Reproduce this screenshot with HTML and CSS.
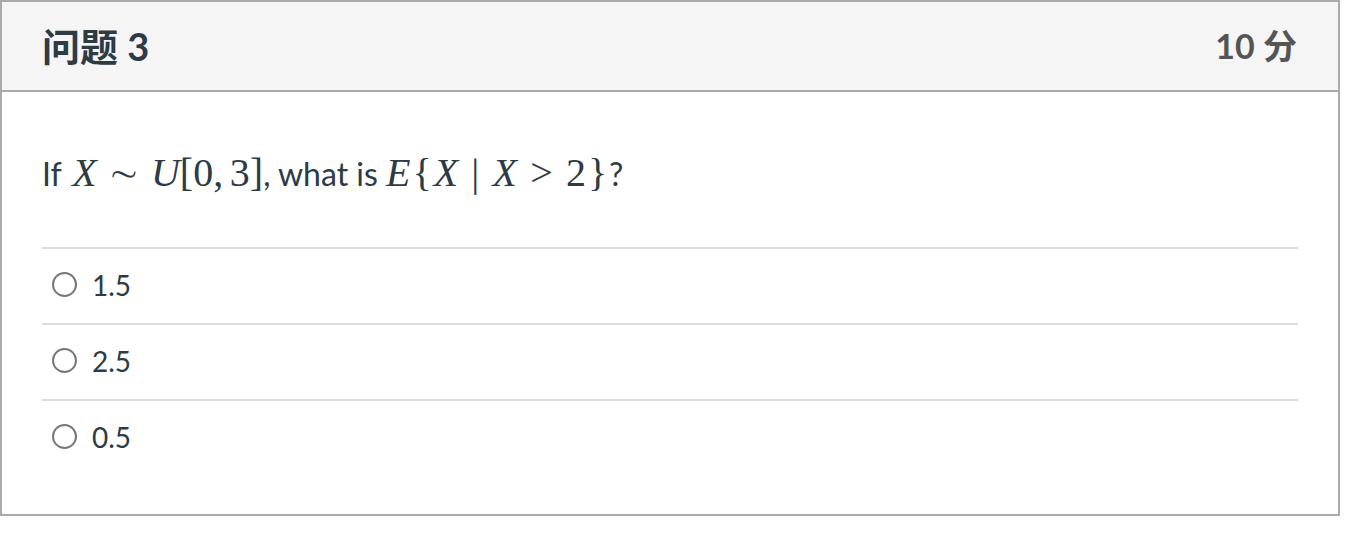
FILE: index.html
```html
<!DOCTYPE html>
<html lang="zh">
<head>
<meta charset="utf-8">
<title>问题 3</title>
<link rel="stylesheet" href="styles.css">
</head>
<body>
<div class="question">
  <div class="header">
    <h2 class="title">问题 3</h2>
    <div class="points">10 分</div>
  </div>
  <div class="content">
    <p class="text">If <span class="m m-first"><i>X</i><span class="rel">∼</span><i>U</i>[0,<span class="thin"></span>3]</span>, what is <span class="m"><i>E</i><span class="br">{</span><i>X</i><span class="rel rel-wide">|</span><i>X</i><span class="rel rel-wide">&gt;</span>2<span class="br">}</span></span>?</p>
    <div class="answers">
      <label class="answer"><span class="radio"></span><span class="atext">1.5</span></label>
      <label class="answer"><span class="radio"></span><span class="atext">2.5</span></label>
      <label class="answer"><span class="radio"></span><span class="atext">0.5</span></label>
    </div>
  </div>
</div>
</body>
</html>
```

FILE: styles.css
```css
html, body {
  margin: 0;
  padding: 0;
  background: #ffffff;
}
body {
  font-family: Lato, "Noto Sans CJK SC", sans-serif;
  color: #2d3b45;
}
.question {
  width: 1336px;
  border: 2px solid #aaaaaa;
}
.header {
  height: 88px;
  background: #f5f5f5;
  border-bottom: 2px solid #aaaaaa;
  display: flex;
  align-items: center;
  justify-content: space-between;
  padding: 0 41px 0 40px;
}
.title {
  margin: 0;
  font-size: 38px;
  font-weight: 700;
  color: #2d3b45;
  line-height: 1;
}
.points {
  font-size: 34px;
  font-weight: 700;
  color: #555555;
  line-height: 1;
}
.content {
  padding: 0 40px 39px 40px;
}
.text {
  margin: 0;
  padding-top: 58px;
  height: 97px;
  box-sizing: content-box;
  font-size: 32px;
  line-height: 48px;
  color: #2d3b45;
}
.m {
  font-family: "Liberation Serif", "Times New Roman", serif;
  font-size: 40px;
  line-height: 0;
  color: #2d3b45;
}
.m-first {
  padding-left: 3px;
}
.m i {
  font-style: italic;
}
.rel {
  padding: 0 0.2778em;
}
.rel-wide {
  padding: 0 0.33em;
}
.br {
  padding: 0 2px;
}
.thin {
  display: inline-block;
  width: 0.1667em;
}
.answers {
  display: flex;
  flex-direction: column;
}
.answer {
  border-top: 2px solid #dddddd;
  display: flex;
  align-items: center;
  gap: 15px;
  padding-left: 10px;
  padding-bottom: 3px;
  box-sizing: content-box;
  height: 71px;
}
.radio {
  width: 21px;
  height: 21px;
  border: 2px solid #777777;
  border-radius: 50%;
  flex: none;
}
.atext {
  font-size: 28px;
  color: #2d3b45;
}
```
